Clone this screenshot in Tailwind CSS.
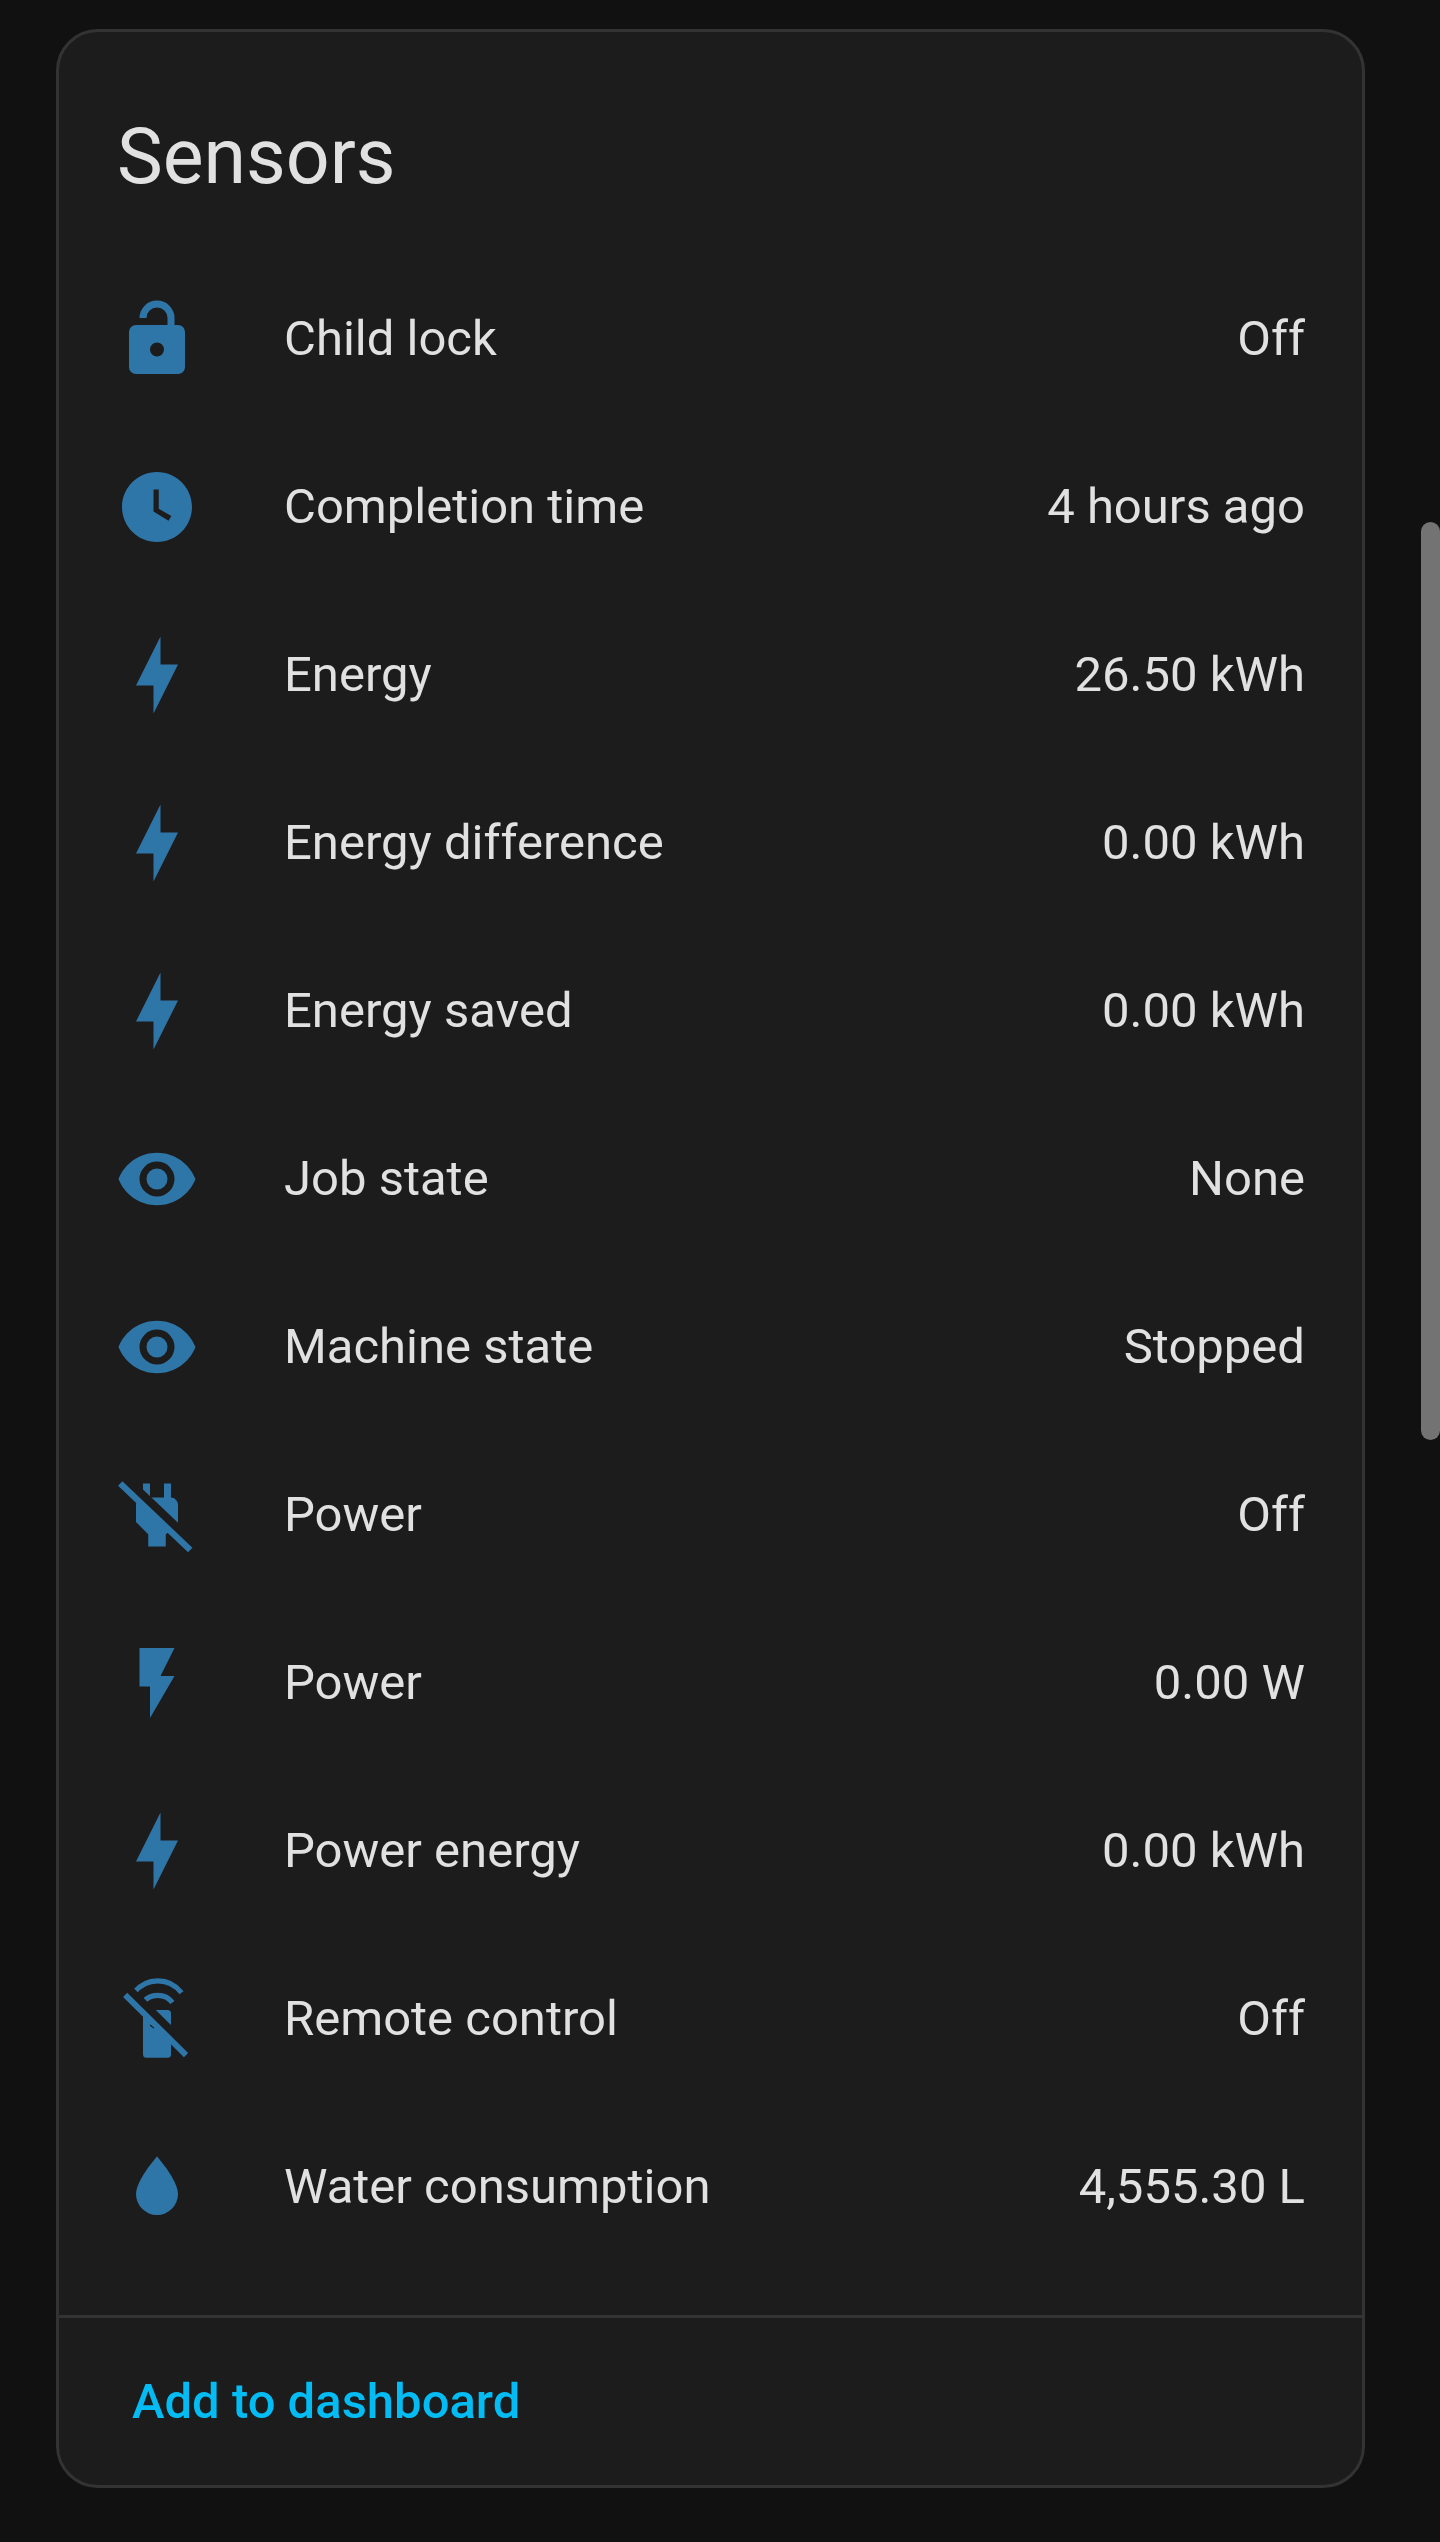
<!DOCTYPE html>
<html lang="en">
<head>
    <meta charset="UTF-8">
    <meta name="viewport" content="width=device-width, initial-scale=1.0">
    <title>Sensors</title>
    <script src="https://cdn.jsdelivr.net/npm/@tailwindcss/browser@4"></script>
</head>
<body class="bg-[#111111] h-[2542px] overflow-hidden font-['Roboto',sans-serif] relative">
    <!-- Overlay scrollbar -->
    <div class="absolute left-[1421px] top-[522px] w-[19px] h-[918px] rounded-full bg-[#737373]"></div>

    <div class="pt-[29px] px-[56px] pr-[75px]">
        <div class="h-[2459px] border-[3px] border-[#333333] rounded-[42px] bg-[#1c1c1c] flex flex-col">
            <!-- Header -->
            <div class="h-[223px] pl-[58px] pt-[80px]">
                <h2 class="text-[77px] leading-[90px] font-normal text-[#e1e1e1]">Sensors</h2>
            </div>

            <!-- Rows -->
            <div class="h-[2016px] pl-[56px] pr-[57px] flex flex-col text-[49px] text-[#e1e1e1]">
                <div class="h-[168px] flex items-center">
                    <svg class="w-[84px] h-[84px] mr-[85px] text-[#2f76a8] shrink-0" viewBox="0 0 24 24" fill="currentColor"><path d="M18,8A2,2 0 0,1 20,10V20A2,2 0 0,1 18,22H6A2,2 0 0,1 4,20V10A2,2 0 0,1 6,8H15V6A3,3 0 0,0 12,3A3,3 0 0,0 9,6H7A5,5 0 0,1 12,1A5,5 0 0,1 17,6V8H18M12,17A2,2 0 0,0 14,15A2,2 0 0,0 12,13A2,2 0 0,0 10,15A2,2 0 0,0 12,17Z"/></svg>
                    <span class="flex-1">Child lock</span><span>Off</span>
                </div>
                <div class="h-[168px] flex items-center">
                    <svg class="w-[84px] h-[84px] mr-[85px] text-[#2f76a8] shrink-0" viewBox="0 0 24 24" fill="currentColor"><path d="M12 2C6.5 2 2 6.5 2 12C2 17.5 6.5 22 12 22C17.5 22 22 17.5 22 12S17.5 2 12 2M15.3 15.9L11 13.3V7H12.5V12.5L16.1 14.6L15.3 15.9Z" fill-rule="evenodd"/></svg>
                    <span class="flex-1">Completion time</span><span>4 hours ago</span>
                </div>
                <div class="h-[168px] flex items-center">
                    <svg class="w-[84px] h-[84px] mr-[85px] text-[#2f76a8] shrink-0" viewBox="0 0 24 24" fill="currentColor"><path d="M11 15H6L13 1V9H18L11 23V15Z"/></svg>
                    <span class="flex-1">Energy</span><span>26.50 kWh</span>
                </div>
                <div class="h-[168px] flex items-center">
                    <svg class="w-[84px] h-[84px] mr-[85px] text-[#2f76a8] shrink-0" viewBox="0 0 24 24" fill="currentColor"><path d="M11 15H6L13 1V9H18L11 23V15Z"/></svg>
                    <span class="flex-1">Energy difference</span><span>0.00 kWh</span>
                </div>
                <div class="h-[168px] flex items-center">
                    <svg class="w-[84px] h-[84px] mr-[85px] text-[#2f76a8] shrink-0" viewBox="0 0 24 24" fill="currentColor"><path d="M11 15H6L13 1V9H18L11 23V15Z"/></svg>
                    <span class="flex-1">Energy saved</span><span>0.00 kWh</span>
                </div>
                <div class="h-[168px] flex items-center">
                    <svg class="w-[84px] h-[84px] mr-[85px] text-[#2f76a8] shrink-0" viewBox="0 0 24 24" fill="currentColor"><path d="M12,9A3,3 0 0,0 9,12A3,3 0 0,0 12,15A3,3 0 0,0 15,12A3,3 0 0,0 12,9M12,17A5,5 0 0,1 7,12A5,5 0 0,1 12,7A5,5 0 0,1 17,12A5,5 0 0,1 12,17M12,4.5C7,4.5 2.73,7.61 1,12C2.73,16.39 7,19.5 12,19.5C17,19.5 21.27,16.39 23,12C21.27,7.61 17,4.5 12,4.5Z"/></svg>
                    <span class="flex-1">Job state</span><span>None</span>
                </div>
                <div class="h-[168px] flex items-center">
                    <svg class="w-[84px] h-[84px] mr-[85px] text-[#2f76a8] shrink-0" viewBox="0 0 24 24" fill="currentColor"><path d="M12,9A3,3 0 0,0 9,12A3,3 0 0,0 12,15A3,3 0 0,0 15,12A3,3 0 0,0 12,9M12,17A5,5 0 0,1 7,12A5,5 0 0,1 12,7A5,5 0 0,1 17,12A5,5 0 0,1 12,17M12,4.5C7,4.5 2.73,7.61 1,12C2.73,16.39 7,19.5 12,19.5C17,19.5 21.27,16.39 23,12C21.27,7.61 17,4.5 12,4.5Z"/></svg>
                    <span class="flex-1">Machine state</span><span>Stopped</span>
                </div>
                <div class="h-[168px] flex items-center">
                    <svg class="w-[84px] h-[84px] mr-[85px] text-[#2f76a8] shrink-0" viewBox="0 0 24 24" fill="currentColor">
                        <path d="M8 3H10V7H14V3H16V7C17 7 18 8 18 9V15L14.5 17.5V21H9.5V17.5L6 14V9C6 8 7 7 8 7Z"/>
                        <path d="M1.5 3L21.5 22" stroke="#1c1c1c" stroke-width="3.8" transform="translate(0.9 -1)"/>
                        <path d="M1.5 3L21.5 22" stroke="currentColor" stroke-width="1.8"/>
                    </svg>
                    <span class="flex-1">Power</span><span>Off</span>
                </div>
                <div class="h-[168px] flex items-center">
                    <svg class="w-[84px] h-[84px] mr-[85px] text-[#2f76a8] shrink-0" viewBox="0 0 24 24" fill="currentColor"><path d="M7,2V13H10V22L17,10H13L17,2H7Z"/></svg>
                    <span class="flex-1">Power</span><span>0.00 W</span>
                </div>
                <div class="h-[168px] flex items-center">
                    <svg class="w-[84px] h-[84px] mr-[85px] text-[#2f76a8] shrink-0" viewBox="0 0 24 24" fill="currentColor"><path d="M11 15H6L13 1V9H18L11 23V15Z"/></svg>
                    <span class="flex-1">Power energy</span><span>0.00 kWh</span>
                </div>
                <div class="h-[168px] flex items-center">
                    <svg class="w-[84px] h-[84px] mr-[85px] text-[#2f76a8] shrink-0" viewBox="0 0 24 24" fill="currentColor">
                        <path d="M5.4 4.5C9 0 15.5 0 19 4.5" fill="none" stroke="currentColor" stroke-width="1.5"/>
                        <path d="M8 7.3C10 4.6 14.4 4.6 16.4 7.3" fill="none" stroke="currentColor" stroke-width="1.5"/>
                        <rect x="8" y="9.4" width="8" height="13.7" rx="1"/>
                        <path d="M2.9 5.1L20.3 22.3" stroke="#1c1c1c" stroke-width="3.6" transform="translate(0.9 -0.9)"/>
                        <path d="M2.9 5.1L20.3 22.3" stroke="currentColor" stroke-width="1.7"/>
                        <path d="M10 13.7L11.1 14.6" stroke="#1c1c1c" stroke-width="0.35"/>
                    </svg>
                    <span class="flex-1">Remote control</span><span>Off</span>
                </div>
                <div class="h-[168px] flex items-center">
                    <svg class="w-[84px] h-[84px] mr-[85px] text-[#2f76a8] shrink-0" viewBox="0 0 24 24" fill="currentColor"><path d="M12,20A6,6 0 0,1 6,14C6,10 12,3.25 12,3.25C12,3.25 18,10 18,14A6,6 0 0,1 12,20Z"/></svg>
                    <span class="flex-1">Water consumption</span><span>4,555.30 L</span>
                </div>
            </div>

            <!-- Footer -->
            <div class="mt-[44px] flex-1 border-t-[3px] border-[#333333] pl-[73px] flex items-center">
                <a class="text-[49px] font-medium text-[#03bcf4]">Add to dashboard</a>
            </div>
        </div>
    </div>
</body>
</html>
